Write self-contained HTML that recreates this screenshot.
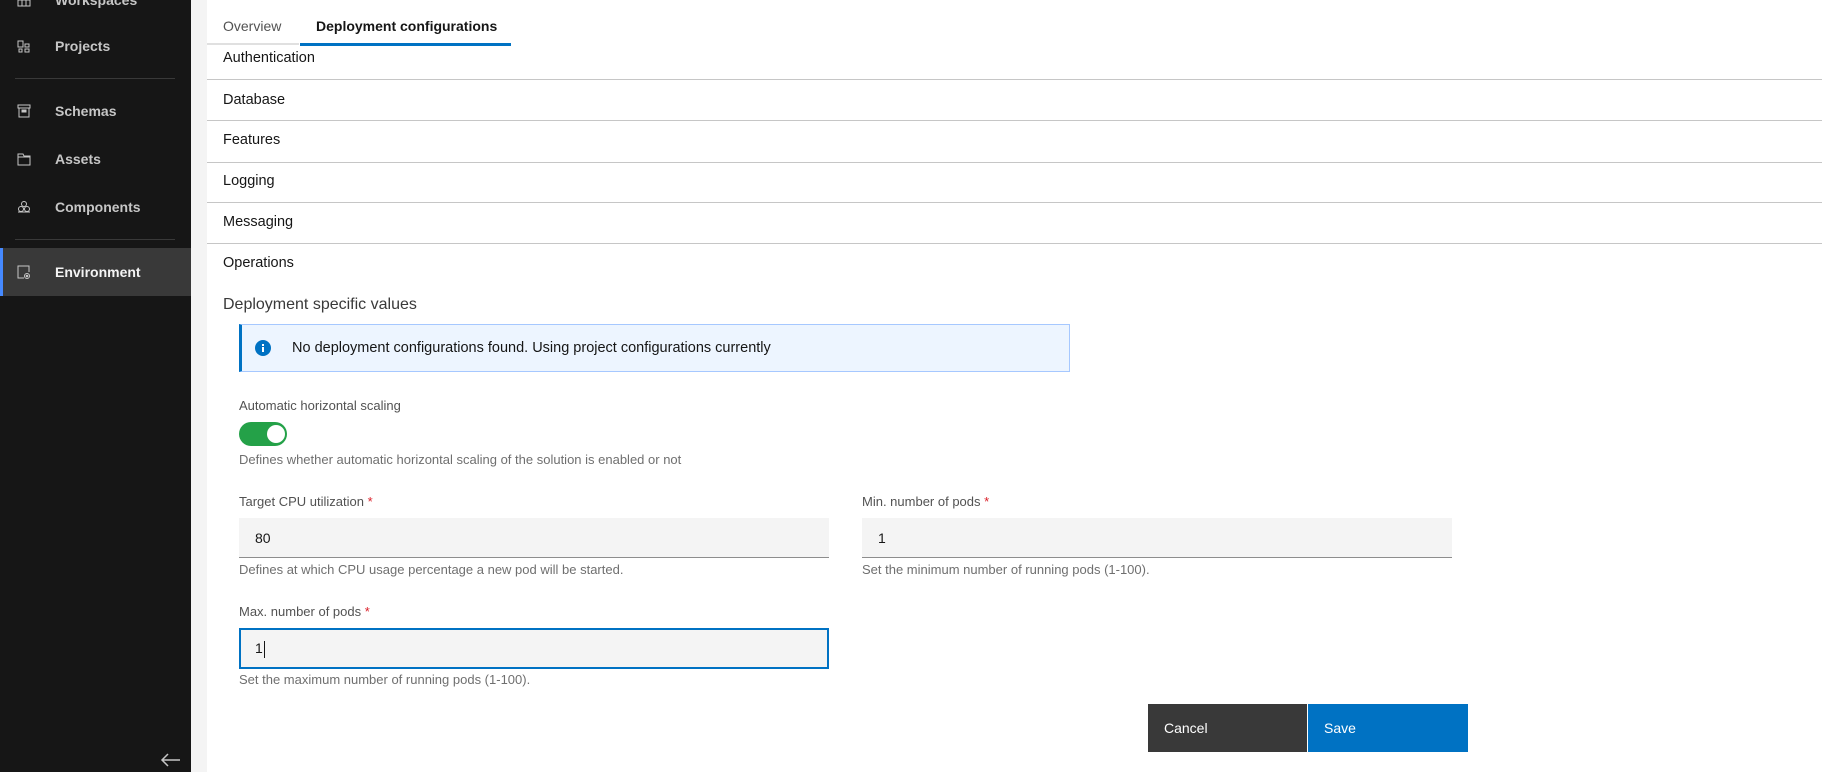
<!DOCTYPE html>
<html><head><meta charset="utf-8"><style>
*{margin:0;padding:0;box-sizing:border-box}
body{width:1822px;height:772px;overflow:hidden;background:#fff;font-family:"Liberation Sans",sans-serif;position:relative;color:#161616}
.a{position:absolute;white-space:nowrap}
#sb{left:0;top:0;width:191px;height:772px;background:#161616}
.it{left:55px;color:#c6c6c6;font-size:14px;font-weight:bold;line-height:16px}
.ic{left:17px;width:14px;height:14px}
.div{left:15px;width:160px;height:1px;background:#393939}
.row{left:207px;width:1615px;height:1px;background:#c6c6c6}
.rt{left:223px;font-size:14.5px;line-height:16px}
.lbl{font-size:13px;color:#525252;line-height:14px}
.lbl b{color:#da1e28;font-weight:normal}
.help{font-size:13px;color:#6f6f6f;line-height:14px}
.inp{background:#f4f4f4;border-bottom:1px solid #8d8d8d;font-size:14px;line-height:40px;padding-left:16px}
</style></head><body>
<div class="a" id="sb"></div>
<div class="a" style="left:191px;top:0;width:16px;height:772px;background:#f4f4f4"></div>
<svg class="a ic" style="top:-7px" viewBox="0 0 14 14" fill="none" stroke="#c6c6c6"><rect x="1" y="1" width="12" height="12"/><path d="M5 1v12M9 1v12M1 7h12"/></svg>
<div class="a it" style="top:-8px">Workspaces</div>
<svg class="a ic" style="top:40px" viewBox="0 0 14 14" fill="none" stroke="#c6c6c6"><rect x="1" y="1" width="5" height="6"/><rect x="8" y="4" width="4" height="3"/><rect x="2" y="9" width="3" height="3"/><rect x="8" y="9" width="4" height="3"/></svg>
<div class="a it" style="top:38px">Projects</div>
<div class="a div" style="top:78px"></div>
<svg class="a ic" style="top:104px" viewBox="0 0 14 14" fill="none" stroke="#c6c6c6"><rect x="1" y="1" width="12" height="3"/><rect x="2" y="4" width="10" height="9"/><rect x="5" y="6" width="4" height="2" fill="#c6c6c6"/></svg>
<div class="a it" style="top:103px">Schemas</div>
<svg class="a ic" style="top:152px" viewBox="0 0 14 14" fill="none" stroke="#c6c6c6"><path d="M1 2h5l1 2h6v9H1z M1 5h12"/></svg>
<div class="a it" style="top:151px">Assets</div>
<svg class="a ic" style="top:200px" viewBox="0 0 14 14" fill="none" stroke="#c6c6c6"><circle cx="7" cy="4" r="2.5"/><circle cx="4" cy="9" r="2.5"/><circle cx="10" cy="9" r="2.5"/><path d="M1 12h12"/></svg>
<div class="a it" style="top:199px">Components</div>
<div class="a div" style="top:239px"></div>
<div class="a" style="left:0;top:248px;width:191px;height:48px;background:#393939;border-left:3px solid #4589ff"></div>
<svg class="a ic" style="top:265px" viewBox="0 0 14 14" fill="none" stroke="#c6c6c6"><path d="M7 13H1V1h11v6"/><circle cx="10" cy="11" r="2.5"/><circle cx="10" cy="11" r="0.8" fill="#c6c6c6"/></svg>
<div class="a it" style="top:264px;color:#f4f4f4">Environment</div>
<svg class="a" style="left:160px;top:752px" width="22" height="16" viewBox="0 0 22 16" fill="none" stroke="#c6c6c6" stroke-width="1.5"><path d="M2 8h18M8 2L2 8l6 6"/></svg>

<div class="a" style="left:223px;top:18px;font-size:14px;color:#525252">Overview</div>
<div class="a" style="left:316px;top:18px;font-size:14px;font-weight:bold">Deployment configurations</div>
<div class="a" style="left:207px;top:43px;width:92px;height:2px;background:#e0e0e0"></div>
<div class="a" style="left:300px;top:43px;width:211px;height:3px;background:#0072c3"></div>

<div class="a rt" style="top:50px">Authentication</div>
<div class="a row" style="top:79px"></div>
<div class="a rt" style="top:92px">Database</div>
<div class="a row" style="top:120px"></div>
<div class="a rt" style="top:132px">Features</div>
<div class="a row" style="top:162px"></div>
<div class="a rt" style="top:173px">Logging</div>
<div class="a row" style="top:202px"></div>
<div class="a rt" style="top:214px">Messaging</div>
<div class="a row" style="top:243px"></div>
<div class="a rt" style="top:255px">Operations</div>
<div class="a" style="left:223px;top:296px;font-size:16px;color:#393939">Deployment specific values</div>

<div class="a" style="left:239px;top:324px;width:831px;height:48px;background:#edf5ff;border:1px solid #a6c8ff;border-left:3px solid #0072c3"></div>
<svg class="a" style="left:255px;top:340px" width="16" height="16" viewBox="0 0 16 16"><circle cx="8" cy="8" r="8" fill="#0072c3"/><rect x="7" y="7" width="2" height="5" fill="#fff"/><rect x="7" y="4" width="2" height="2" fill="#fff"/></svg>
<div class="a" style="left:292px;top:340px;font-size:14.5px;line-height:16px">No deployment configurations found. Using project configurations currently</div>

<div class="a lbl" style="left:239px;top:399px">Automatic horizontal scaling</div>
<div class="a" style="left:239px;top:422px;width:48px;height:24px;border-radius:12px;background:#24a148"></div>
<div class="a" style="left:267px;top:425px;width:18px;height:18px;border-radius:9px;background:#fff"></div>
<div class="a help" style="left:239px;top:453px">Defines whether automatic horizontal scaling of the solution is enabled or not</div>

<div class="a lbl" style="left:239px;top:495px">Target CPU utilization <b>*</b></div>
<div class="a inp" style="left:239px;top:518px;width:590px;height:40px">80</div>
<div class="a help" style="left:239px;top:563px">Defines at which CPU usage percentage a new pod will be started.</div>

<div class="a lbl" style="left:862px;top:495px">Min. number of pods <b>*</b></div>
<div class="a inp" style="left:862px;top:518px;width:590px;height:40px">1</div>
<div class="a help" style="left:862px;top:563px">Set the minimum number of running pods (1-100).</div>

<div class="a lbl" style="left:239px;top:605px">Max. number of pods <b>*</b></div>
<div class="a" style="left:239px;top:628px;width:590px;height:41px;background:#f4f4f4;border:2px solid #0072c3;font-size:14px;line-height:37px;padding-left:14px">1<span style="display:inline-block;width:1px;height:17px;background:#161616;vertical-align:middle;margin-left:1px"></span></div>
<div class="a help" style="left:239px;top:673px">Set the maximum number of running pods (1-100).</div>

<div class="a" style="left:1148px;top:704px;width:159px;height:48px;background:#393939;color:#fff;font-size:14px;line-height:48px;padding-left:16px">Cancel</div>
<div class="a" style="left:1308px;top:704px;width:160px;height:48px;background:#0072c3;color:#fff;font-size:14px;line-height:48px;padding-left:16px">Save</div>
</body></html>
